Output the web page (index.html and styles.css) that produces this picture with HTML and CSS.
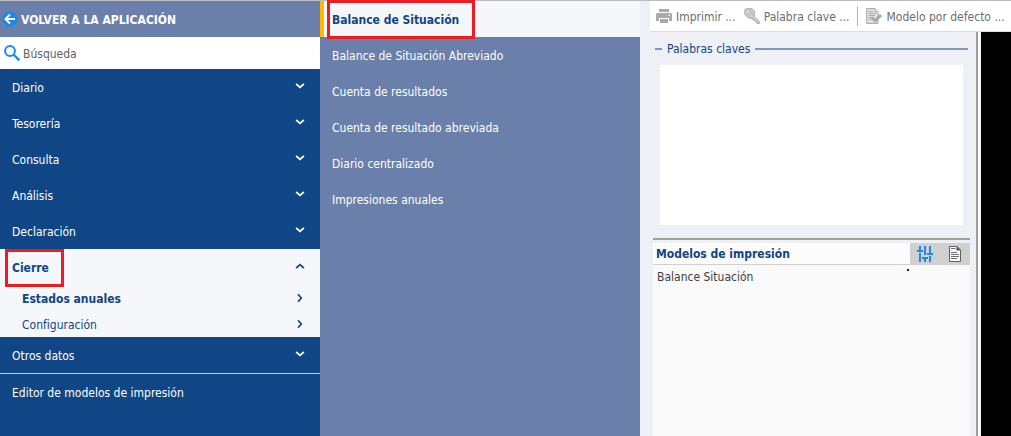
FILE: index.html
```html
<!DOCTYPE html>
<html lang="es">
<head>
<meta charset="utf-8">
<title>Cierre - Balance de Situación</title>
<link rel="stylesheet" href="styles.css">
</head>
<body>
<svg class="defs" aria-hidden="true">
  <symbol id="chevron" viewBox="0 0 10 10"><path d="M1.200 3 5 6.300 8.800 3" fill="none" stroke="currentColor" stroke-width="1.700"/></symbol>
</svg>
<div class="app">
  <nav class="sidebar">
    <button class="back" type="button">
      <svg class="icon" viewBox="0 0 16 16"><circle cx="8" cy="8" r="7.800" fill="#1e88e5"/><path d="M13 8H4M8 3.500 3.500 8 8 12.500" fill="none" stroke="#fff" stroke-width="2"/></svg>
      <span>VOLVER A LA APLICACIÓN</span>
    </button>
    <label class="search">
      <svg class="icon" viewBox="0 0 16 16"><circle cx="6" cy="6" r="4.900" fill="none" stroke="#1e88e5" stroke-width="2"/><path d="M9.500 9.500 15.300 15.300" stroke="#1e88e5" stroke-width="2.400"/></svg>
      <input type="text" placeholder="Búsqueda" aria-label="Búsqueda">
    </label>
    <ul class="menu">
      <li><button class="item" type="button"><span>Diario</span><svg class="chevron"><use href="#chevron"/></svg></button></li>
      <li><button class="item" type="button"><span>Tesorería</span><svg class="chevron"><use href="#chevron"/></svg></button></li>
      <li><button class="item" type="button"><span>Consulta</span><svg class="chevron"><use href="#chevron"/></svg></button></li>
      <li><button class="item" type="button"><span>Análisis</span><svg class="chevron"><use href="#chevron"/></svg></button></li>
      <li><button class="item" type="button"><span>Declaración</span><svg class="chevron"><use href="#chevron"/></svg></button></li>
      <li class="open">
        <button class="item current" type="button"><span>Cierre</span><svg class="chevron up"><use href="#chevron"/></svg></button>
        <span class="mark mark-menu"></span>
        <ul class="menu">
          <li><button class="item sub current" type="button"><span>Estados anuales</span><svg class="chevron right"><use href="#chevron"/></svg></button></li>
          <li><button class="item sub" type="button"><span>Configuración</span><svg class="chevron right"><use href="#chevron"/></svg></button></li>
        </ul>
      </li>
      <li class="last"><button class="item" type="button"><span>Otros datos</span><svg class="chevron"><use href="#chevron"/></svg></button></li>
      <li><button class="item" type="button"><span>Editor de modelos de impresión</span></button></li>
    </ul>
  </nav>

  <nav class="submenu">
    <a class="link selected" href="#">Balance de Situación<span class="mark mark-link"></span></a>
    <a class="link" href="#">Balance de Situación Abreviado</a>
    <a class="link" href="#">Cuenta de resultados</a>
    <a class="link" href="#">Cuenta de resultado abreviada</a>
    <a class="link" href="#">Diario centralizado</a>
    <a class="link" href="#">Impresiones anuales</a>
  </nav>

  <main class="content">
    <div class="toolbar">
      <button class="tool" type="button">
        <svg class="icon" viewBox="0 0 16 16"><path d="M3 1h10v3H3zM1 5h14l1 1v7h-3v-3H3v3H0V6z" fill="#a9a9a9"/><path d="M4 11h8v4H4z" fill="#a9a9a9"/><path d="M12.500 6.500h1.500V8h-1.500z" fill="#fff"/></svg>
        <span>Imprimir ...</span>
      </button>
      <button class="tool" type="button">
        <svg class="icon" viewBox="0 0 16 16"><path d="M7.300 10.200 9.500 8 15.500 13.500V15.500H12.500V13.800H11V12.400H9.600z" fill="#c0c0c0" stroke="#adadad" stroke-width=".8"/><path d="M2 .8 8 .6 10.600 3.200V8L8.300 10.500 4.500 10 .8 6.500V2z" fill="#c6c6c6" stroke="#b0b0b0"/><circle cx="3.700" cy="3.600" r="1.400" fill="#fff" stroke="#aaa" stroke-width=".6"/><path d="M6 6.500 14.500 14.500" stroke="#dcdcdc"/></svg>
        <span>Palabra clave ...</span>
      </button>
      <span class="divider"></span>
      <button class="tool" type="button">
        <svg class="icon" viewBox="0 0 16 16"><path d="M.7.600H9L12 3.500V15.400H.7z" fill="#e2e2e2" stroke="#a6a6a6"/><path d="M9 .6V3.500H12" fill="#fff" stroke="#a6a6a6"/><path d="M2.500 3.500H7M2.500 5.500H10M2.500 7.500H9M2.500 9.500H6M2.500 11.500H5" stroke="#adadad"/><path d="M5 10.500 7 8.800 9.300 11 14 6.300 15.700 8 9.300 14.500z" fill="#acacac" stroke="#a0a0a0" stroke-width=".6"/></svg>
        <span>Modelo por defecto ...</span>
      </button>
    </div>
    <div class="workspace">
      <div class="panel">
        <fieldset class="keywords">
          <legend>Palabras claves</legend>
          <textarea aria-label="Palabras claves"></textarea>
        </fieldset>
        <section class="models">
          <header class="models-head">
            <h2>Modelos de impresión</h2>
            <div class="actions">
              <button type="button" aria-label="Ajustes"><svg class="icon" viewBox="0 0 16 16"><path d="M3 0V4M3 7V16M8 0V9M8 13V16M13 0V7M13 10V16" stroke="#1e88e5" stroke-width="2"/><path d="M0 5H6M5 12H11M10 8H16" stroke="#1e88e5" stroke-width="2"/></svg></button>
              <button type="button" aria-label="Documento"><svg class="icon" viewBox="0 0 16 16"><path d="M2.500.500H10L13.500 4V15.500H2.500z" fill="#fff" stroke="#606060"/><path d="M9.500 0 14 4.500H9.500z" fill="#555"/><path d="M4 2.500H8.500M4 6.500H10M4 8.500H12M4 10.500H12M4 12.500H10" stroke="#707070"/></svg></button>
            </div>
          </header>
          <ul class="models-list">
            <li>Balance Situación<span class="dot"></span></li>
          </ul>
        </section>
      </div>
      <div class="preview"></div>
    </div>
  </main>
</div>
</body>
</html>
```
FILE: styles.css
```css
* { box-sizing: border-box; }

body {
  margin: 0;
  font: 12px/16px "DejaVu Sans Condensed", "Noto Sans", sans-serif;
  color: #404040;
}

button, input, textarea {
  margin: 0;
  padding: 0;
  border: 0;
  background: none;
  color: inherit;
  font: inherit;
  text-align: left;
}

ul { margin: 0; padding: 0; list-style: none; }

.defs { display: none; }
.icon { width: 16px; height: 16px; flex: none; }

.app {
  display: grid;
  grid-template-columns: 320px 320px 1fr;
  min-height: 100vh;
  border-top: 1px solid #bcbcbc;
}

.sidebar { background: #104586; color: #fff; }

.back {
  display: flex;
  align-items: center;
  gap: 3px;
  width: 100%;
  height: 36px;
  padding-left: 2px;
  background: #6a80aa;
  font-weight: bold;
}
.back span, .item span, .tool span { padding-top: 2px; }

.search {
  display: flex;
  align-items: center;
  gap: 3px;
  height: 32px;
  padding-left: 4px;
  background: #fff;
}
.search input { flex: 1; padding-top: 2px; color: #404040; outline: 0; }
.search input::placeholder { color: #606060; opacity: 1; }

.item {
  display: flex;
  align-items: center;
  justify-content: space-between;
  width: 100%;
  height: 36px;
  padding: 0 15px 0 12px;
}
.sub { height: 26px; padding-left: 22px; }
.current { font-weight: bold; }
.open { position: relative; background: #f5f7fa; color: #104586; }
.last { border-bottom: 1px solid #c3cede; }

.chevron { width: 10px; height: 10px; margin-bottom: 2px; }
.up { transform: rotate(180deg); }
.right { margin-bottom: 0; transform: rotate(-90deg); }

.submenu { background: #6a80aa; color: #fff; }
.link {
  display: flex;
  align-items: center;
  height: 36px;
  padding: 2px 0 0 12px;
  color: inherit;
  text-decoration: none;
}
.selected {
  position: relative;
  padding-left: 8px;
  border-left: 4px solid #ffb900;
  background: #f5f7fa;
  color: #104586;
  font-weight: bold;
}

.mark { position: absolute; border: 3px solid #ed1c24; }
.mark-menu { top: 0; left: 5px; width: 59px; height: 38px; }
.mark-link { top: -1px; left: 3px; width: 148px; height: 39px; }

.content {
  display: flex;
  flex-direction: column;
  min-width: 0;
  background: #eef0f5;
}

.toolbar {
  display: flex;
  align-items: center;
  gap: 8px;
  height: 31px;
  margin-left: 10px;
  padding: 0 4px 0 6px;
  border-bottom: 1px solid #dcdcdc;
  background: #fff;
  color: #6e6e6e;
  white-space: nowrap;
}
.tool { display: flex; align-items: center; gap: 4px; }
.divider { width: 1px; height: 20px; background: #b4b4b4; }

.workspace { display: flex; flex: 1; }
.panel {
  display: flex;
  flex: 1;
  flex-direction: column;
  padding: 9px 6px 0 13px;
}

.keywords {
  min-width: 0;
  margin: 0 2px;
  padding: 8px 5px 13px;
  border: 0 solid #7f97be;
  border-top-width: 2px;
}
.keywords legend { margin-left: 2px; padding: 0 5px; color: #104586; }
.keywords textarea {
  display: block;
  width: 100%;
  height: 160px;
  background: #fff;
  resize: none;
  outline: 0;
}

.models {
  display: flex;
  flex: 1;
  flex-direction: column;
  padding-top: 3px;
  border-top: 2px solid #a39e9e;
}
.models-head {
  display: flex;
  justify-content: space-between;
  height: 22px;
  padding-left: 3px;
  border-bottom: 1px solid #d0d0d0;
  background: #fcfcfc;
}
.models-head h2 { margin: 0; color: #104586; font-size: 12px; line-height: 22px; }
.actions { display: flex; background: #d0d0d0; }
.actions button {
  display: flex;
  align-items: center;
  justify-content: center;
  width: 30px;
}
.models-list { flex: 1; background: #fafafa; }
.models-list li {
  display: flex;
  justify-content: space-between;
  padding: 4px 61px 4px 4px;
}
.dot { width: 2px; height: 2px; background: #1010d0; }

.preview {
  width: 35px;
  border-left: 2px solid #a39e9e;
  background: linear-gradient(to right, #fafafa 3px, #000 3px);
}
```
